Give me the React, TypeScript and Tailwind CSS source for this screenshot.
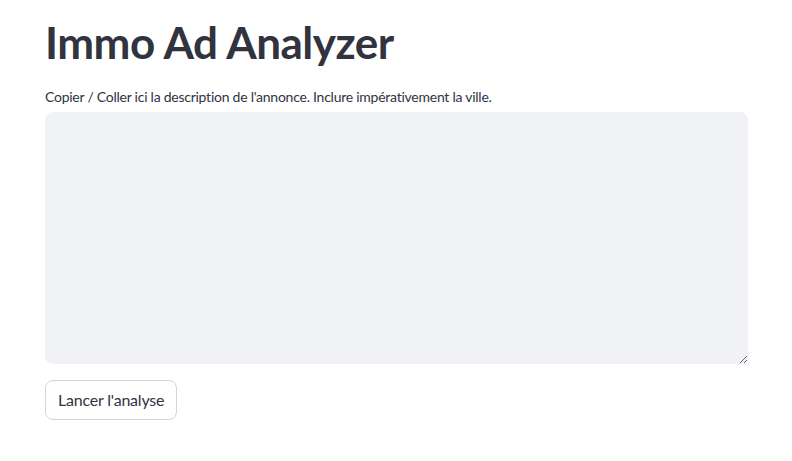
export default function App() {
  return (
    <div className="min-h-[461px] w-full bg-white text-[#31333f] [font-variant-ligatures:none]" style={{ fontFamily: '"Source Sans Pro", Lato, "Noto Sans", sans-serif' }}>
      <div className="px-[45px] pt-[14px]">
        <h1 className="text-[44px] font-bold leading-[56px] tracking-[-0.5px] text-[#31333f]">Immo Ad Analyzer</h1>
        <label className="mt-[17px] block text-[14px] leading-[20px] tracking-[-0.25px] text-[#31333f]">
          Copier / Coller ici la description de l'annonce. Inclure impérativement la ville.
        </label>
        <textarea className="mt-[5px] block h-[252px] w-[703px] resize-y rounded-[8px] bg-[#f0f2f6] p-3 outline-none" />
        <button className="mt-[16px] h-[40px] rounded-[8px] border border-[#d4d5d9] bg-white px-[12px] text-[16px] tracking-[-0.2px] text-[#31333f]">
          Lancer l'analyse
        </button>
      </div>
    </div>
  );
}
